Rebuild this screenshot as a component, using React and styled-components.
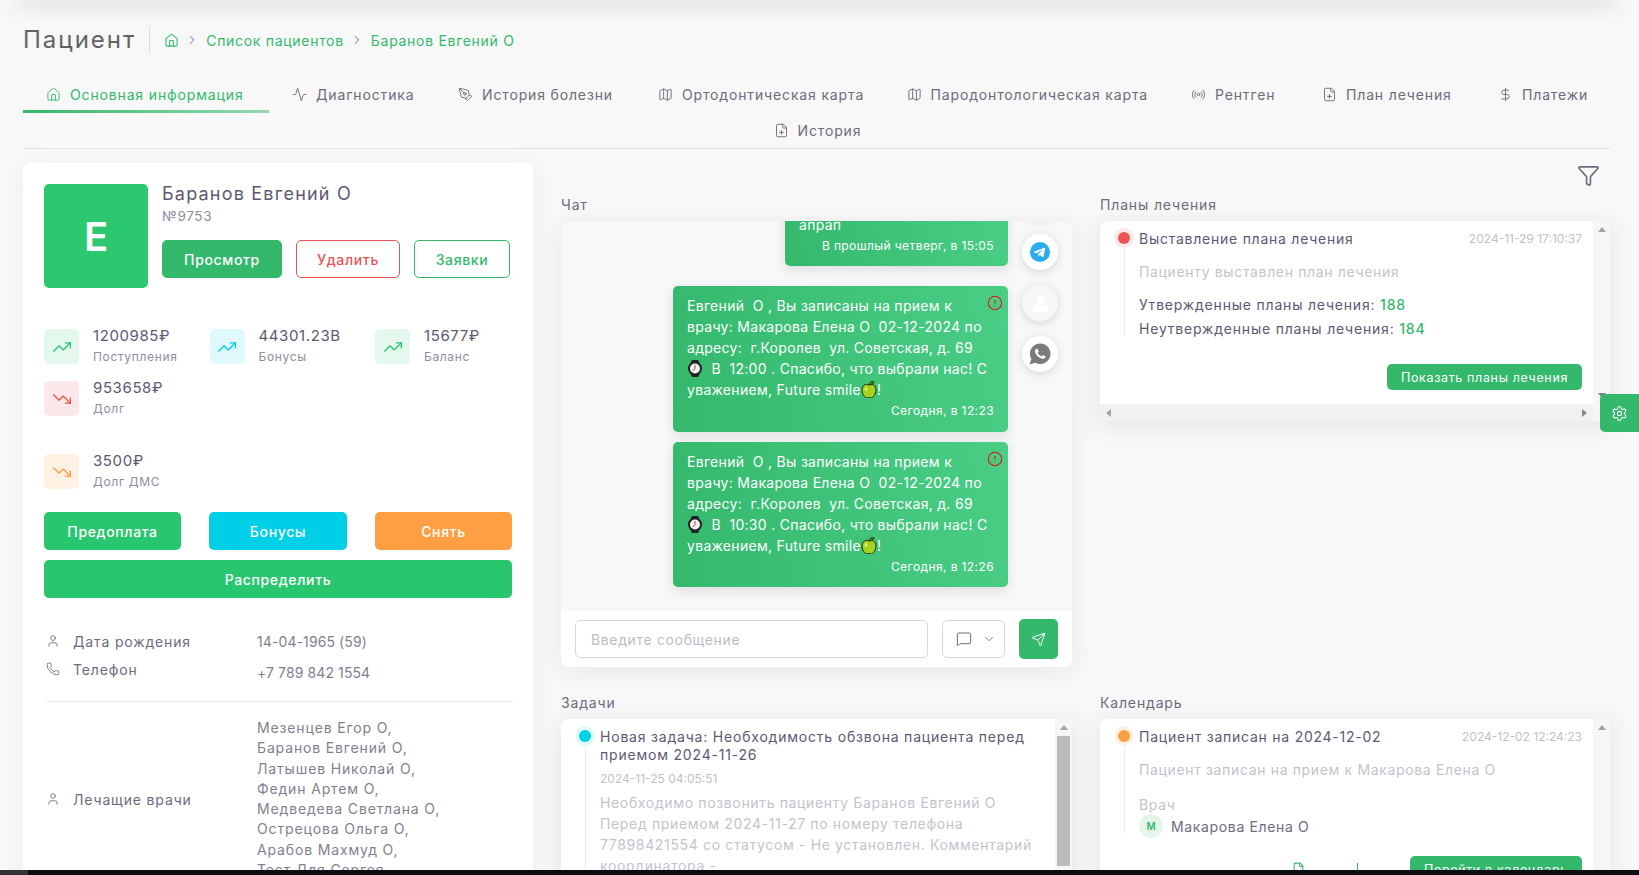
import styled, { createGlobalStyle } from "styled-components";
import {
  Home, ChevronRight, ChevronDown, Activity, PenTool, Map, Radio, FilePlus, DollarSign,
  Filter, Settings, Send, MessageSquare, User, Phone, TrendingUp, TrendingDown, AlertCircle, File,
} from "lucide-react";
import { FaTelegramPlane, FaUser } from "react-icons/fa";
import { IoLogoWhatsapp } from "react-icons/io";

const GlobalStyle = createGlobalStyle`
  html, body {
    margin: 0;
    height: 875px;
    overflow: hidden;
    background: #f8f8f8;
    font-family: Inter, "Noto Sans", sans-serif;
    letter-spacing: 0.65px;
    color: #5e5873;
  }
  * { box-sizing: border-box; }
`;

const tabs = [
  { label: "Основная информация", icon: Home, w: 246, active: true },
  { label: "Диагностика", icon: Activity, w: 166 },
  { label: "История болезни", icon: PenTool, w: 200 },
  { label: "Ортодонтическая карта", icon: Map, w: 248.5 },
  { label: "Пародонтологическая карта", icon: Map, w: 284.5 },
  { label: "Рентген", icon: Radio, w: 131 },
  { label: "План лечения", icon: FilePlus, w: 176 },
  { label: "Платежи", icon: DollarSign, w: 135 },
];

const doctors = [
  "Мезенцев Егор О,", "Баранов Евгений О,", "Латышев Николай О,", "Федин Артем О,",
  "Медведева Светлана О,", "Острецова Ольга О,", "Арабов Махмуд О,", "Тест Для Сергея",
];

const WatchEmoji = () => (
  <svg width="16" height="17" viewBox="0 0 16 17" style={{ verticalAlign: "-3px" }}>
    <rect x="4" y="0" width="8" height="17" rx="2" fill="#222" />
    <circle cx="8" cy="8.5" r="7" fill="#222" />
    <circle cx="8" cy="8.5" r="5" fill="#f4f4f4" />
    <path d="M8 8.5V5M8 8.5L6 11" stroke="#c33" strokeWidth="1" fill="none" />
  </svg>
);

const AppleEmoji = () => (
  <svg width="16" height="17" viewBox="0 0 16 17" style={{ verticalAlign: "-3px" }}>
    <path d="M8 4C5 2.500 1 4 1 9c0 4 3 8 5 8 1 0 1.300-.5 2-.5s1 .5 2 .5c2 0 5-4 5-8 0-5-4-6.500-7-5z" fill="#a5d21e" stroke="#1c2a05" strokeWidth="1" />
    <path d="M8 4c0-2 1.500-3.500 5-4 0 2.500-1.500 4-5 4z" fill="#4d7c12" stroke="#1c2a05" strokeWidth=".7" />
    <ellipse cx="5" cy="8" rx="1.400" ry="2" fill="#d9ee78" />
  </svg>
);

const Message = ({ time, text, alert, width, $after }) => (
  <Bubble $w={width} $after={$after}>
    {alert && <AlertMark><AlertCircle size={16} strokeWidth={1.6} /></AlertMark>}
    <BubbleText>{text}</BubbleText>
    <BubbleTime>{time}</BubbleTime>
  </Bubble>
);

const appointment = (hour) => (
  <>
    {"Евгений  О , Вы записаны на прием к\nврачу: Макарова Елена О  02-12-2024 по\nадресу:  г.Королев  ул. Советская, д. 69\n"}
    <WatchEmoji />
    {`  В  ${hour} . Спасибо, что выбрали нас! С\nуважением, Future smile`}
    <AppleEmoji />
    !
  </>
);

const Stat = ({ value, label, color, tint, down, $top }) => (
  <StatItem $top={$top}>
    <StatIcon $tint={tint} $color={color}>
      {down ? <TrendingDown size={20} strokeWidth={1.6} /> : <TrendingUp size={20} strokeWidth={1.6} />}
    </StatIcon>
    <div>
      <StatValue>{value}</StatValue>
      <StatLabel>{label}</StatLabel>
    </div>
  </StatItem>
);

const Rail = ({ children, arrows }) => (
  <VTrack>
    <ArrowUp />
    {children}
    {arrows && <ArrowDown />}
  </VTrack>
);

export default function App() {
  return (
    <Page>
      <GlobalStyle />
      <TopShadow />
      <TitleRow>
        <PageTitle>Пациент</PageTitle>
        <Crumbs>
          <Home size={15} strokeWidth={1.7} />
          <CrumbSep><ChevronRight size={14} strokeWidth={1.6} /></CrumbSep>
          <span>Список пациентов</span>
          <CrumbSep><ChevronRight size={14} strokeWidth={1.6} /></CrumbSep>
          <span>Баранов Евгений О</span>
        </Crumbs>
      </TitleRow>

      <TabBar>
        <TabRow>
          {tabs.map((t) => (
            <Tab key={t.label} $w={t.w} $active={t.active}>
              <t.icon size={15} strokeWidth={1.5} />
              {t.label}
            </Tab>
          ))}
        </TabRow>
        <TabRow $center>
          <Tab $w={132} $short>
            <FilePlus size={15} strokeWidth={1.5} />
            История
          </Tab>
        </TabRow>
      </TabBar>

      <Main>
        <PatientCard>
          <Head>
            <Avatar>Е</Avatar>
            <div>
              <PatientName>Баранов Евгений О</PatientName>
              <PatientNo>№9753</PatientNo>
              <HeadButtons>
                <HeadButton $w={120} $bg="#33b86c" $fg="#fff">Просмотр</HeadButton>
                <HeadButton $w={104} $fg="#ea5455">Удалить</HeadButton>
                <HeadButton $w={96} $fg="#33b86c">Заявки</HeadButton>
              </HeadButtons>
            </div>
          </Head>

          <Stats>
            <Stat value="1200985₽" label="Поступления" color="#28c76f" tint="#e5f8ee" />
            <Stat value="44301.23B" label="Бонусы" color="#00cfe8" tint="#e0f9fc" />
            <Stat value="15677₽" label="Баланс" color="#28c76f" tint="#e5f8ee" />
            <Stat value="953658₽" label="Долг" color="#ea5455" tint="#fce8e8" down />
            <Stat value="3500₽" label="Долг ДМС" color="#ff9f43" tint="#fff1e3" down $top />
          </Stats>

          <Actions>
            <ActionButton $bg="#28c76f">Предоплата</ActionButton>
            <ActionButton $bg="#00cfe8">Бонусы</ActionButton>
            <ActionButton $bg="#ff9f43">Снять</ActionButton>
            <ActionButton $bg="#28c76f" $wide>Распределить</ActionButton>
          </Actions>

          <InfoBlock>
            <InfoRow $h={28}>
              <InfoLabel><User size={14} strokeWidth={1.5} />Дата рождения</InfoLabel>
              <InfoValue>14-04-1965 (59)</InfoValue>
            </InfoRow>
            <InfoRow $h={28}>
              <InfoLabel><Phone size={14} strokeWidth={1.5} />Телефон</InfoLabel>
              <InfoValue $shift>+7 789 842 1554</InfoValue>
            </InfoRow>
            <Divider />
            <InfoRow>
              <InfoLabel><User size={14} strokeWidth={1.5} />Лечащие врачи</InfoLabel>
              <DoctorList>
                {doctors.map((d) => <div key={d}>{d}</div>)}
              </DoctorList>
            </InfoRow>
          </InfoBlock>
        </PatientCard>

        <Board>
          <FilterRow><Filter size={23} strokeWidth={1.7} /></FilterRow>
          <Columns>
            <section>
              <SectionLabel>Чат</SectionLabel>
              <ChatPanel>
                <ChatBody>
                  <MessageList>
                    <Message width={223} text="апрап" time="В прошлый четверг, в 15:05" />
                    <Message width={335} $after={20} alert text={appointment("12:00")} time="Сегодня, в 12:23" />
                    <Message width={335} $after={10} alert text={appointment("10:30")} time="Сегодня, в 12:26" />
                  </MessageList>
                  <Channels>
                    <Channel />
                    <Channel $color="#2aabee">
                      <TelegramBadge><FaTelegramPlane size={13} /></TelegramBadge>
                    </Channel>
                    <Channel $color="#fff" $bg="#f7f7f7"><FaUser size={17} /></Channel>
                    <Channel $color="#7b7b7b"><IoLogoWhatsapp size={24} /></Channel>
                  </Channels>
                </ChatBody>
                <ChatFooter>
                  <MessageInput placeholder="Введите сообщение" />
                  <ChannelSelect>
                    <MessageSquare size={16} strokeWidth={1.5} />
                    <ChevronDown size={14} strokeWidth={1.5} />
                  </ChannelSelect>
                  <SendButton><Send size={15} strokeWidth={1.5} /></SendButton>
                </ChatFooter>
              </ChatPanel>
            </section>

            <section>
              <SectionLabel>Планы лечения</SectionLabel>
              <ScrollPanel $h={200}>
                <PanelContent>
                  <Entry $line={95}>
                    <Dot $color="#ea5455" $tint="#fce8e8" />
                    <EntryHead>
                      <EntryTitle>Выставление плана лечения</EntryTitle>
                      <EntryDate>2024-11-29 17:10:37</EntryDate>
                    </EntryHead>
                    <EntryNote $top={17}>Пациенту выставлен план лечения</EntryNote>
                    <PlanCount $top={15}>Утвержденные планы лечения: <b>188</b></PlanCount>
                    <PlanCount $top={6}>Неутвержденные планы лечения: <b>184</b></PlanCount>
                    <PanelActions $top={26}>
                      <SmallButton $w={195}>Показать планы лечения</SmallButton>
                    </PanelActions>
                  </Entry>
                </PanelContent>
                <Rail arrows><TrackFill /></Rail>
                <HTrack><ArrowLeft /><ArrowRight /></HTrack>
              </ScrollPanel>
            </section>

            <section>
              <SectionLabel>Задачи</SectionLabel>
              <ScrollPanel $h={200} $noH>
                <PanelContent>
                  <Entry $line={150}>
                    <Dot $color="#00cfe8" $tint="#e0f9fc" />
                    <TaskTitle>Новая задача: Необходимость обзвона пациента перед{"\n"}приемом 2024-11-26</TaskTitle>
                    <TaskDate>2024-11-25 04:05:51</TaskDate>
                    <TaskText>
                      {"Необходимо позвонить пациенту Баранов Евгений О\nПеред приемом 2024-11-27 по номеру телефона\n77898421554 со статусом - Не установлен. Комментарий\nкоординатора -"}
                    </TaskText>
                  </Entry>
                </PanelContent>
                <Rail><Thumb $h={130} /></Rail>
              </ScrollPanel>
            </section>

            <section>
              <SectionLabel>Календарь</SectionLabel>
              <ScrollPanel $h={200} $noH>
                <PanelContent>
                  <Entry $line={95}>
                    <Dot $color="#ff9f43" $tint="#fff1e3" />
                    <EntryHead>
                      <EntryTitle>Пациент записан на 2024-12-02</EntryTitle>
                      <EntryDate>2024-12-02 12:24:23</EntryDate>
                    </EntryHead>
                    <EntryNote $top={17}>Пациент записан на прием к Макарова Елена О</EntryNote>
                    <EntryNote $top={17}>Врач</EntryNote>
                    <DoctorChip>
                      <DoctorBadge>М</DoctorBadge>
                      Макарова Елена О
                    </DoctorChip>
                    <CalendarActions>
                      <File size={13} strokeWidth={2} color="#33b86c" />
                      <Tick />
                      <SmallButton $w={172}>Перейти в календарь</SmallButton>
                    </CalendarActions>
                  </Entry>
                </PanelContent>
                <Rail />
              </ScrollPanel>
            </section>
          </Columns>
        </Board>
      </Main>

      <SettingsTab><Settings size={17} strokeWidth={1.5} /></SettingsTab>
      <BottomEdge />
    </Page>
  );
}

const Page = styled.div`
  height: 875px;
  padding: 0 29px 0 23px;
  overflow: hidden;
`;

const TopShadow = styled.div`
  height: 0;
  box-shadow: 0 0 22px 6px rgba(0, 0, 0, 0.13);
`;

const TitleRow = styled.div`
  display: flex;
  align-items: center;
  height: 28px;
  margin-top: 26px;
`;

const PageTitle = styled.h1`
  margin: 0;
  padding-right: 13px;
  font-size: 24px;
  font-weight: 400;
  line-height: 28px;
  letter-spacing: 2px;
  color: #636363;
  border-right: 1px solid #d6dce1;
`;

const Crumbs = styled.div`
  display: flex;
  align-items: center;
  padding-left: 14px;
  font-size: 14px;
  letter-spacing: 0.7px;
  color: #33b86c;
`;

const CrumbSep = styled.span`
  display: flex;
  margin: 0 7px 0 6px;
  color: #6e6b7b;
`;

const TabBar = styled.nav`
  margin-top: 21px;
  border-bottom: 1px solid #dfe3e8;
`;

const TabRow = styled.div`
  display: flex;
  justify-content: ${(p) => (p.$center ? "center" : "flex-start")};
`;

const Tab = styled.a`
  position: relative;
  display: flex;
  flex: none;
  align-items: center;
  gap: 9px;
  width: ${(p) => p.$w}px;
  height: ${(p) => (p.$short ? 35 : 38)}px;
  padding-left: 23px;
  font-size: 14px;
  letter-spacing: 0.85px;
  color: ${(p) => (p.$active ? "#33b86c" : "#6e6b7b")};

  &::after {
    content: "";
    display: ${(p) => (p.$active ? "block" : "none")};
    position: absolute;
    left: 0;
    right: 0;
    bottom: 0;
    height: 3px;
    background: linear-gradient(90deg, #33b86c, rgba(51, 184, 108, 0.5));
  }
`;

const Main = styled.div`
  display: grid;
  grid-template-columns: 510px 1049px;
  gap: 28px;
  margin-top: 14px;
  align-items: start;
`;

const PatientCard = styled.aside`
  padding: 21px;
  background: #fff;
  border-radius: 8px;
  box-shadow: 0 4px 24px rgba(34, 41, 47, 0.05);
`;

const Head = styled.div`
  display: flex;
  gap: 14px;
`;

const Avatar = styled.div`
  display: flex;
  flex: none;
  align-items: center;
  justify-content: center;
  width: 104px;
  height: 104px;
  border-radius: 5px;
  background: #2bc870;
  color: #fff;
  font-size: 40px;
  font-weight: 600;
  letter-spacing: 0;
`;

const PatientName = styled.div`
  font-size: 18px;
  line-height: 20px;
  letter-spacing: 1.200px;
  color: #5e5873;
`;

const PatientNo = styled.div`
  margin-top: 4px;
  font-size: 13.500px;
  line-height: 16px;
  color: #8f8da0;
`;

const HeadButtons = styled.div`
  display: flex;
  gap: 14px;
  margin-top: 16px;
`;

const HeadButton = styled.button`
  width: ${(p) => p.$w}px;
  height: 38px;
  padding: 0;
  border: 1px solid ${(p) => p.$bg || p.$fg};
  border-radius: 5px;
  background: ${(p) => p.$bg || "#fff"};
  color: ${(p) => p.$fg};
  font: inherit;
  font-size: 14px;
  font-weight: 500;
  letter-spacing: 0.65px;
`;

const Stats = styled.div`
  display: grid;
  grid-template-columns: repeat(3, 165.500px);
  row-gap: 17px;
  margin-top: 41px;
`;

const StatItem = styled.div`
  display: flex;
  gap: 14px;
  height: 35px;
  grid-column: ${(p) => (p.$top ? "1" : "auto")};
  margin-top: ${(p) => (p.$top ? 21 : 0)}px;
`;

const StatIcon = styled.div`
  display: flex;
  flex: none;
  align-items: center;
  justify-content: center;
  width: 35px;
  height: 35px;
  border-radius: 5px;
  background: ${(p) => p.$tint};
  color: ${(p) => p.$color};
`;

const StatValue = styled.div`
  margin-top: -3px;
  font-size: 15px;
  line-height: 20px;
  letter-spacing: 0.6px;
  color: #5e5873;
`;

const StatLabel = styled.div`
  margin-top: 2px;
  font-size: 12px;
  line-height: 18px;
  color: #8f8da0;
`;

const Actions = styled.div`
  display: grid;
  grid-template-columns: 137px 138px 137px;
  column-gap: 28px;
  row-gap: 10px;
  margin-top: 23px;
`;

const ActionButton = styled.button`
  grid-column: ${(p) => (p.$wide ? "1 / -1" : "auto")};
  height: 38px;
  border: 0;
  border-radius: 5px;
  background: ${(p) => p.$bg};
  color: #fff;
  font: inherit;
  font-size: 14px;
  font-weight: 500;
  letter-spacing: 0.65px;
`;

const InfoBlock = styled.div`
  margin-top: 29px;
`;

const InfoRow = styled.div`
  display: flex;
  align-items: center;
  height: ${(p) => (p.$h ? `${p.$h}px` : "auto")};
  margin-left: 2px;
  font-size: 14px;
  color: #6e6b7b;
`;

const InfoLabel = styled.div`
  display: flex;
  flex: none;
  align-items: center;
  gap: 13px;
  width: 211px;
  letter-spacing: 0.85px;

  svg {
    flex: none;
  }
`;

const InfoValue = styled.div`
  font-size: 14px;
  letter-spacing: 0.1px;
  color: #82808f;
  transform: translateY(${(p) => (p.$shift ? 3 : 0)}px);
`;

const Divider = styled.hr`
  height: 1px;
  margin: 18px -1px 16px 2px;
  border: 0;
  background: #ebe9f1;
`;

const DoctorList = styled.div`
  font-size: 14px;
  line-height: 20.300px;
  letter-spacing: 0.85px;
  color: #82808f;
`;

const Board = styled.div``;

const FilterRow = styled.div`
  display: flex;
  justify-content: flex-end;
  height: 33px;
  padding-top: 1px;
  padding-right: 10px;
  color: #6e6b7b;
`;

const Columns = styled.div`
  display: grid;
  grid-template-columns: 511px 510px;
  column-gap: 28px;
  row-gap: 27px;
  align-items: start;
`;

const SectionLabel = styled.div`
  height: 18px;
  margin-bottom: 7px;
  font-size: 14px;
  line-height: 18px;
  letter-spacing: 0.85px;
  color: #6e6b7b;
`;

const ChatPanel = styled.div`
  height: 446px;
  overflow: hidden;
  border-radius: 8px;
  background: #f8f8f8;
  box-shadow: 0 4px 24px rgba(34, 41, 47, 0.08);
`;

const ChatBody = styled.div`
  display: flex;
  justify-content: flex-end;
  gap: 14px;
  height: 390px;
  padding-right: 14px;
  overflow: hidden;
`;

const MessageList = styled.div`
  display: flex;
  flex-direction: column;
  align-items: flex-end;
  justify-content: flex-end;
  height: 366px;
`;

const Bubble = styled.div`
  position: relative;
  flex: none;
  width: ${(p) => p.$w}px;
  margin-top: ${(p) => p.$after || 0}px;
  padding: 9px 14px 12.500px;
  border-radius: 5px;
  background: linear-gradient(80deg, #33b86c, #4ace86);
  box-shadow: 0 4px 12px rgba(34, 41, 47, 0.12);
  color: #fff;
`;

const BubbleText = styled.div`
  font-size: 14px;
  line-height: 21px;
  letter-spacing: 0.3px;
  white-space: pre;
  color: #fff;
`;

const BubbleTime = styled.div`
  margin-top: 3px;
  font-size: 12px;
  line-height: 16px;
  letter-spacing: 0.4px;
  text-align: right;
`;

const AlertMark = styled.span`
  position: absolute;
  top: 9px;
  right: 5px;
  display: flex;
  color: #e8100c;
`;

const Channels = styled.div`
  display: flex;
  flex: none;
  flex-direction: column;
  gap: 15px;
  margin-top: -38px;
`;

const Channel = styled.div`
  display: flex;
  flex: none;
  align-items: center;
  justify-content: center;
  width: 36px;
  height: 36px;
  border-radius: 50%;
  background: ${(p) => p.$bg || "#fff"};
  color: ${(p) => p.$color || "#999"};
  box-shadow: 0 2px 8px rgba(34, 41, 47, 0.16);
`;

const TelegramBadge = styled.span`
  display: flex;
  align-items: center;
  justify-content: center;
  width: 20px;
  height: 20px;
  padding-right: 1px;
  border-radius: 50%;
  background: #2aabee;
  color: #fff;
`;

const ChatFooter = styled.div`
  display: flex;
  align-items: center;
  gap: 14px;
  height: 56px;
  padding: 0 14px;
  background: #fff;
`;

const MessageInput = styled.input`
  flex: 1;
  min-width: 0;
  height: 38px;
  padding: 0 15px;
  border: 1px solid #d8d6de;
  border-radius: 5px;
  outline: none;
  font: inherit;
  font-size: 14px;
  letter-spacing: 0.65px;

  &::placeholder {
    color: #bdbcc6;
  }
`;

const ChannelSelect = styled.div`
  display: flex;
  flex: none;
  align-items: center;
  justify-content: space-between;
  width: 63px;
  height: 38px;
  padding: 0 8px 0 13px;
  border: 1px solid #d8d6de;
  border-radius: 5px;
  color: #6e6b7b;
`;

const SendButton = styled.button`
  display: flex;
  flex: none;
  align-items: center;
  justify-content: center;
  width: 39px;
  height: 40px;
  padding: 0;
  border: 0;
  border-radius: 5px;
  background: #33b86c;
  color: #fff;
`;

const ScrollPanel = styled.div`
  display: grid;
  grid-template-columns: 1fr 17px;
  grid-template-rows: ${(p) => (p.$noH ? "1fr" : "1fr 17px")};
  height: ${(p) => p.$h}px;
  border-radius: 8px 0 0 0;
  box-shadow: 0 4px 24px rgba(34, 41, 47, 0.1);
  overflow: hidden;
`;

const PanelContent = styled.div`
  background: #fff;
  padding: 9px 11px 0 39px;
  overflow: hidden;
`;

const VTrack = styled.div`
  position: relative;
  grid-row: 1 / -1;
  grid-column: 2;
  display: flex;
  flex-direction: column;
  align-items: center;
  padding-top: 6px;
  background: #f6f6f6;
`;

const ArrowUp = styled.span`
  flex: none;
  width: 0;
  height: 0;
  border: 4px solid transparent;
  border-top: 0;
  border-bottom: 5px solid #a3a3a3;
`;

const ArrowDown = styled.span`
  flex: none;
  width: 0;
  height: 0;
  margin-bottom: 23px;
  border: 4px solid transparent;
  border-bottom: 0;
  border-top: 5px solid #7e7e7e;
`;

const TrackFill = styled.div`
  flex: 1;
`;

const Thumb = styled.div`
  flex: none;
  width: 13px;
  height: ${(p) => p.$h}px;
  margin-top: 6px;
  background: #bcbcbc;
`;

const HTrack = styled.div`
  display: flex;
  align-items: center;
  justify-content: space-between;
  padding: 0 6px;
  background: #f1f1f1;
`;

const ArrowLeft = styled.span`
  width: 0;
  height: 0;
  border: 4px solid transparent;
  border-left: 0;
  border-right: 5px solid #a3a3a3;
`;

const ArrowRight = styled.span`
  width: 0;
  height: 0;
  border: 4px solid transparent;
  border-right: 0;
  border-left: 5px solid #8a8a8a;
`;

const Entry = styled.div`
  position: relative;

  &::before {
    content: "";
    position: absolute;
    left: -15px;
    top: 10px;
    width: 1px;
    height: ${(p) => p.$line}px;
    background: #ebe9f1;
  }
`;

const Dot = styled.span`
  position: absolute;
  left: -21px;
  top: 2px;
  width: 12px;
  height: 12px;
  border-radius: 50%;
  background: ${(p) => p.$color};
  box-shadow: 0 0 0 4px ${(p) => p.$tint};
`;

const EntryHead = styled.div`
  display: flex;
  align-items: center;
  justify-content: space-between;
  height: 16px;
`;

const EntryTitle = styled.div`
  font-size: 14px;
  letter-spacing: 0.75px;
  color: #5e5873;
`;

const EntryDate = styled.div`
  font-size: 12px;
  letter-spacing: 0;
  color: #c0bfc9;
`;

const EntryNote = styled.div`
  margin-top: ${(p) => p.$top}px;
  font-size: 14px;
  line-height: 18px;
  color: #c4c3cc;
`;

const PlanCount = styled.div`
  margin-top: ${(p) => p.$top}px;
  font-size: 14px;
  line-height: 18px;
  letter-spacing: 0.8px;
  color: #5e5873;

  b {
    font-weight: 500;
    color: #33b86c;
  }
`;

const PanelActions = styled.div`
  display: flex;
  justify-content: flex-end;
  margin-top: ${(p) => p.$top}px;
`;

const SmallButton = styled.button`
  width: ${(p) => p.$w}px;
  height: 26px;
  padding: 0;
  border: 0;
  border-radius: 5px;
  background: #33b86c;
  color: #fff;
  font: inherit;
  font-size: 12.500px;
  letter-spacing: 0.65px;
`;

const TaskTitle = styled.div`
  font-size: 14px;
  line-height: 18px;
  letter-spacing: 0.8px;
  white-space: pre;
  color: #5e5873;
`;

const TaskDate = styled.div`
  margin-top: 7px;
  font-size: 12px;
  line-height: 16px;
  letter-spacing: 0;
  color: #c0bfc9;
`;

const TaskText = styled.div`
  margin-top: 5px;
  font-size: 14px;
  line-height: 21px;
  white-space: pre;
  color: #c4c3cc;
`;

const DoctorChip = styled.div`
  display: flex;
  align-items: center;
  gap: 8px;
  font-size: 14px;
  color: #6e6b7b;
`;

const DoctorBadge = styled.span`
  display: flex;
  align-items: center;
  justify-content: center;
  width: 24px;
  height: 24px;
  border-radius: 50%;
  background: #e5f5ec;
  color: #33b86c;
  font-size: 10px;
  font-weight: 600;
  letter-spacing: 0;
`;

const CalendarActions = styled.div`
  display: flex;
  align-items: flex-start;
  justify-content: flex-end;
  margin-top: 18px;

  svg {
    margin: 6px 52px 0 0;
  }
`;

const Tick = styled.span`
  width: 1px;
  height: 14px;
  margin: 7px 52px 0 0;
  background: #33b86c;
`;

const SettingsTab = styled.div`
  position: fixed;
  top: 394px;
  right: 0;
  display: flex;
  align-items: center;
  justify-content: center;
  width: 39px;
  height: 38px;
  border-radius: 5px 0 0 5px;
  background: #33b86c;
  color: #fff;
`;

const BottomEdge = styled.div`
  position: fixed;
  left: 0;
  right: 0;
  bottom: 0;
  height: 5px;
  background: linear-gradient(90deg, #333 28px, #0b0d12 28px);
`;
